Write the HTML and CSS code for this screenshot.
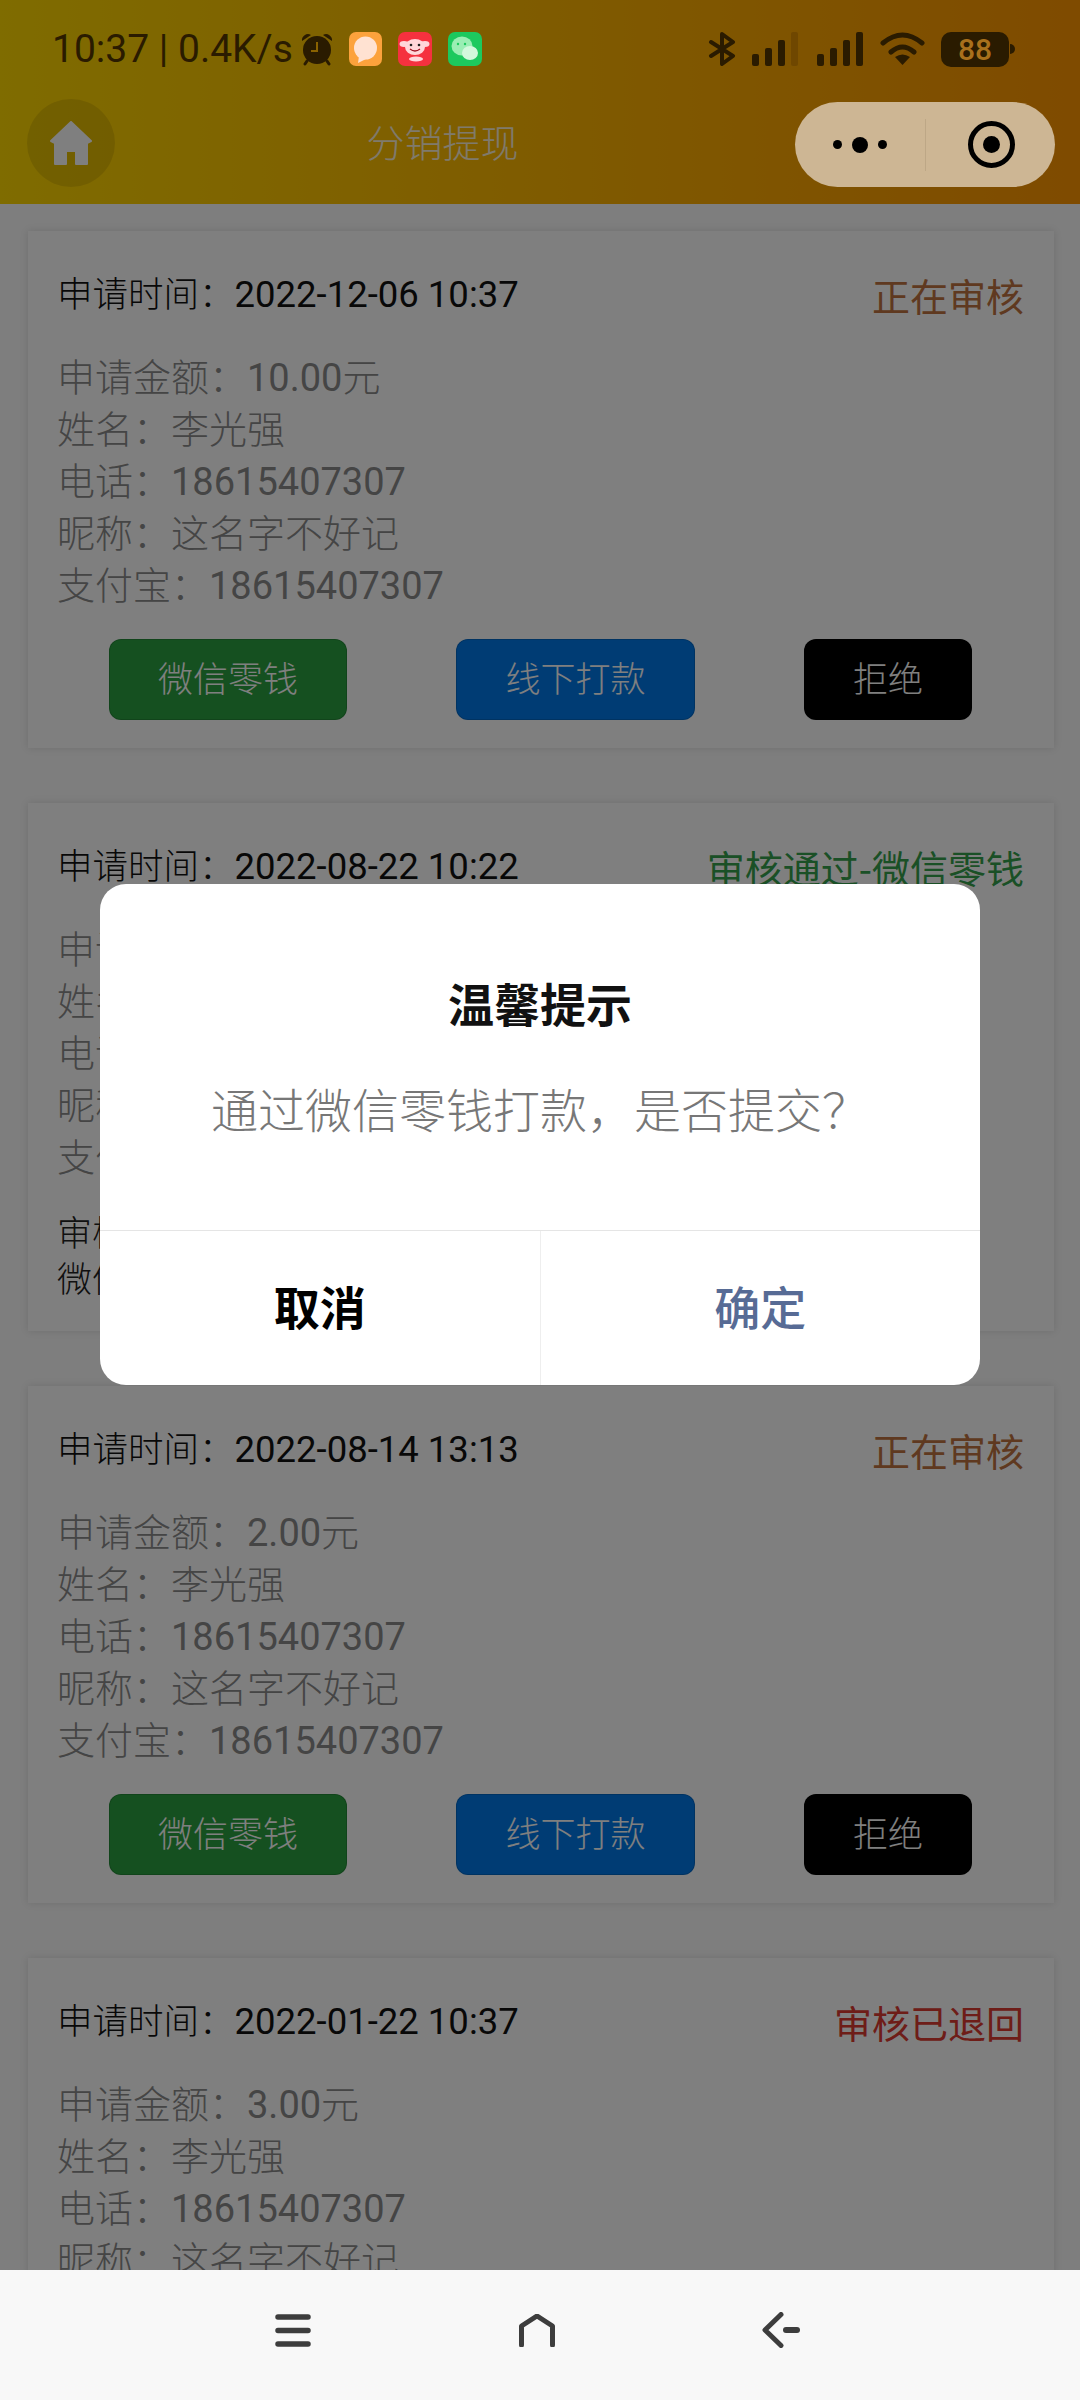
FILE: index.html
```html
<!DOCTYPE html>
<html lang="zh-CN">
<head>
    <meta charset="UTF-8">
    <meta name="viewport" content="width=device-width, initial-scale=1.0">
    <title>分销提现</title>
    <link rel="stylesheet" href="styles.css">
</head>
<body>
    <div class="screen">
        <div class="header">
            <div class="title-row">
                <div class="home-button">
                    <svg width="42" height="44" viewBox="0 0 42 44"><path fill="#fff" stroke="#fff" stroke-width="2" stroke-linejoin="round" d="M21 1 L41 20 L37 22 V43 H26 V30 H16 V43 H5 V22 L1 20 Z"/></svg>
                </div>
                <div class="page-title">分销提现</div>
                <div class="capsule-space"></div>
            </div>
        </div>

        <div class="list">
            <!-- Card 1 -->
            <div class="card">
                <div class="card-head">
                    <div class="apply-time">申请时间：<span class="num">2022-12-06 10:37</span></div>
                    <div class="state state-wait">正在审核</div>
                </div>
                <div class="info">
                    <div>申请金额：<span class="num">10.00</span>元</div>
                    <div>姓名：李光强</div>
                    <div>电话：<span class="num">18615407307</span></div>
                    <div>昵称：这名字不好记</div>
                    <div>支付宝：<span class="num">18615407307</span></div>
                </div>
                <div class="actions">
                    <button class="btn btn-green">微信零钱</button>
                    <button class="btn btn-blue">线下打款</button>
                    <button class="btn btn-black">拒绝</button>
                </div>
            </div>

            <!-- Card 2 -->
            <div class="card">
                <div class="card-head">
                    <div class="apply-time">申请时间：<span class="num">2022-08-22 10:22</span></div>
                    <div class="state state-pass">审核通过-微信零钱</div>
                </div>
                <div class="info">
                    <div>申请金额：<span class="num">5.00</span>元</div>
                    <div>姓名：李光强</div>
                    <div>电话：<span class="num">18615407307</span></div>
                    <div>昵称：这名字不好记</div>
                    <div>支付宝：<span class="num">18615407307</span></div>
                </div>
                <div class="audit">
                    <div>审核时间：<span class="num">2022-08-22 10:30</span></div>
                    <div>微信零钱</div>
                </div>
            </div>

            <!-- Card 3 -->
            <div class="card">
                <div class="card-head">
                    <div class="apply-time">申请时间：<span class="num">2022-08-14 13:13</span></div>
                    <div class="state state-wait">正在审核</div>
                </div>
                <div class="info">
                    <div>申请金额：<span class="num">2.00</span>元</div>
                    <div>姓名：李光强</div>
                    <div>电话：<span class="num">18615407307</span></div>
                    <div>昵称：这名字不好记</div>
                    <div>支付宝：<span class="num">18615407307</span></div>
                </div>
                <div class="actions">
                    <button class="btn btn-green">微信零钱</button>
                    <button class="btn btn-blue">线下打款</button>
                    <button class="btn btn-black">拒绝</button>
                </div>
            </div>

            <!-- Card 4 -->
            <div class="card">
                <div class="card-head">
                    <div class="apply-time">申请时间：<span class="num">2022-01-22 10:37</span></div>
                    <div class="state state-back">审核已退回</div>
                </div>
                <div class="info">
                    <div>申请金额：<span class="num">3.00</span>元</div>
                    <div>姓名：李光强</div>
                    <div>电话：<span class="num">18615407307</span></div>
                    <div>昵称：这名字不好记</div>
                    <div>支付宝：<span class="num">18615407307</span></div>
                </div>
            </div>
        </div>

        <div class="navbar">
            <svg width="36" height="33" viewBox="0 0 36 33"><path fill="none" stroke="#3d3d3d" stroke-width="5.500" stroke-linecap="round" d="M3 3 H33 M3 16.500 H33 M3 30 H33"/></svg>
            <svg width="36" height="33" viewBox="0 0 36 33"><path fill="none" stroke="#3d3d3d" stroke-width="5" stroke-linecap="round" stroke-linejoin="round" d="M2.500 31 V12 L18 2 L33.500 12 V31"/></svg>
            <svg width="38" height="36" viewBox="0 0 38 36"><path fill="none" stroke="#3d3d3d" stroke-width="5" stroke-linecap="round" stroke-linejoin="round" d="M19 2.500 L3 18 L19 33.500"/><path fill="none" stroke="#3d3d3d" stroke-width="6" stroke-linecap="round" d="M24 18 H35"/></svg>
        </div>

        <!-- Dim layer over the page, then the dialog -->
        <div class="mask"></div>

        <div class="statusbar">
            <span class="clock">10:37 | 0.4K/s</span>
            <svg width="32" height="34" viewBox="0 0 32 34">
                <circle cx="16" cy="18" r="14" fill="#2a1b00"/>
                <path fill="#2a1b00" d="M1 9 a6 6 0 0 1 9-6 z M31 9 a6 6 0 0 0-9-6 z"/>
                <path fill="none" stroke="#2a1b00" stroke-width="3" stroke-linecap="round" d="M6 29 L4 32 M26 29 L28 32"/>
                <path fill="none" stroke="#8a6200" stroke-width="2" d="M16 10 V19 H10"/>
            </svg>
            <svg width="33" height="34" viewBox="0 0 33 34">
                <rect width="33" height="34" rx="7" fill="#fca23c"/>
                <circle cx="16.500" cy="16" r="11.500" fill="#ffe2d2"/>
                <path fill="#ffe2d2" d="M10 24 L9 31 L17 27 Z"/>
            </svg>
            <svg width="34" height="34" viewBox="0 0 34 34">
                <rect width="34" height="34" rx="7" fill="#f5313f"/>
                <ellipse cx="17" cy="15" rx="10" ry="8" fill="#ffd6da"/>
                <ellipse cx="6" cy="12" rx="4.500" ry="3" fill="#ffd6da"/>
                <ellipse cx="27" cy="12" rx="4.500" ry="3" fill="#ffd6da"/>
                <circle cx="13" cy="13" r="1.300" fill="#222"/>
                <circle cx="21" cy="13" r="1.300" fill="#222"/>
                <path fill="none" stroke="#a01020" stroke-width="1.300" d="M12 17 Q17 21 22 17"/>
                <ellipse cx="18" cy="27" rx="7" ry="2.500" fill="#ffd6da"/>
            </svg>
            <svg width="34" height="34" viewBox="0 0 34 34">
                <rect width="34" height="34" rx="7" fill="#1cc95e"/>
                <ellipse cx="14" cy="14" rx="10.500" ry="9.500" fill="#9aeeb4"/>
                <circle cx="10" cy="12" r="1.200" fill="#1cc95e"/>
                <circle cx="17" cy="12" r="1.200" fill="#1cc95e"/>
                <ellipse cx="22" cy="21" rx="8" ry="7" fill="#d2f8dc"/>
            </svg>

            <div class="status-right">
                <svg width="28" height="34" viewBox="0 0 28 34"><path fill="none" stroke="#2a1b00" stroke-width="4" stroke-linejoin="round" stroke-linecap="round" d="M3 10 L25 24 L14 32 V2 L25 10 L3 24"/></svg>
                <svg class="sig-first" width="47" height="34" viewBox="0 0 47 34">
                    <rect x="0" y="22" width="7" height="12" rx="2" fill="#2a1b00"/>
                    <rect x="13" y="16" width="7" height="18" rx="2" fill="#2a1b00"/>
                    <rect x="26" y="8" width="7" height="26" rx="2" fill="#2a1b00"/>
                    <rect x="39" y="0" width="7" height="34" rx="2" fill="#6f4700"/>
                </svg>
                <svg width="47" height="34" viewBox="0 0 47 34">
                    <rect x="0" y="22" width="7" height="12" rx="2" fill="#2a1b00"/>
                    <rect x="13" y="16" width="7" height="18" rx="2" fill="#2a1b00"/>
                    <rect x="26" y="8" width="7" height="26" rx="2" fill="#2a1b00"/>
                    <rect x="39" y="0" width="7" height="34" rx="2" fill="#2a1b00"/>
                </svg>
                <svg width="45" height="34" viewBox="0 0 45 34">
                    <path fill="none" stroke="#2a1b00" stroke-width="5" stroke-linecap="round" d="M3 11 Q22.500 -5 42 11 M11 20 Q22.500 10 34 20"/>
                    <path fill="#2a1b00" d="M22.500 33 L15 25 Q22.500 20 30 25 Z"/>
                </svg>
                <div class="battery"><div class="battery-body">88</div><div class="battery-nub"></div></div>
            </div>
        </div>

        <div class="capsule">
            <div class="capsule-more">
                <span class="dot"></span>
                <span class="dot dot-big"></span>
                <span class="dot"></span>
            </div>
            <div class="capsule-line"></div>
            <div class="capsule-close"><div class="ring"><div class="ring-core"></div></div></div>
        </div>

        <div class="dialog">
            <div class="dialog-body">
                <div class="dialog-title">温馨提示</div>
                <div class="dialog-text">通过微信零钱打款，是否提交？</div>
            </div>
            <div class="dialog-foot">
                <div class="dialog-btn dialog-cancel">取消</div>
                <div class="dialog-btn dialog-ok">确定</div>
            </div>
        </div>
    </div>
</body>
</html>
```

FILE: styles.css
```css
* {
    box-sizing: border-box;
}
body {
    margin: 0;
    background-color: #fcfcfc;
    font-family: "Noto Sans CJK SC", "Noto Sans", sans-serif;
    font-weight: 300;
}
.screen {
    position: relative;
    width: 1080px;
    height: 2400px;
    overflow: hidden;
    display: flex;
    flex-direction: column;
}
.num {
    font-family: Roboto, "Noto Sans", sans-serif;
    font-size: 38px;
    font-weight: 400;
}

/* Header */
.header {
    height: 204px;
    flex-shrink: 0;
    padding-top: 99px;
    background: linear-gradient(to right, #ffd800, #ff9600);
}
.title-row {
    display: flex;
    align-items: center;
    height: 88px;
    padding-left: 27px;
}
.home-button {
    width: 88px;
    height: 88px;
    border-radius: 50%;
    background-color: rgba(0, 0, 0, 0.1);
    display: flex;
    justify-content: center;
    align-items: center;
}
.page-title {
    flex: 1;
    text-align: center;
    font-size: 38px;
    padding-bottom: 6px;
    color: #fff;
    opacity: 0.85;
}
.capsule-space {
    width: 310px;
}

/* List */
.list {
    flex: 1;
    min-height: 0;
    overflow: hidden;
    padding: 27px 26px 0 28px;
}
.card {
    background-color: #fff;
    box-shadow: 0 0 8px rgba(0, 0, 0, 0.12);
    padding: 36px 30px 28px 29px;
    margin-bottom: 55px;
}
.card-head {
    display: flex;
    justify-content: space-between;
    align-items: center;
    height: 52px;
    margin-bottom: 30px;
}
.apply-time {
    font-size: 35.500px;
    line-height: 52px;
    color: #111;
}
.apply-time .num {
    font-size: 36.500px;
}
.state {
    font-size: 38px;
    font-weight: 400;
    line-height: 52px;
    padding-top: 4px;
}
.state-wait {
    color: #bf7340;
}
.state-pass {
    color: #34a04c;
}
.state-back {
    color: #dc3a30;
}
.info {
    font-size: 38px;
    color: #8a8a8a;
}
.info div {
    height: 52px;
    line-height: 52px;
}
.audit {
    margin: 27px 0 3px;
    font-size: 35px;
    color: #222;
}
.audit div {
    height: 46px;
    line-height: 46px;
}
.actions {
    display: flex;
    justify-content: space-between;
    margin-top: 30px;
    padding: 0 52px;
}
.btn {
    height: 81px;
    border: 1px solid rgba(0, 0, 0, 0.15);
    border-radius: 12px;
    color: #fff;
    font-family: inherit;
    font-size: 35px;
    font-weight: 300;
    padding: 0 0 6px;
}
.btn-green {
    width: 238px;
    background-color: #2aa040;
}
.btn-blue {
    width: 239px;
    background-color: #0078e8;
}
.btn-black {
    width: 168px;
    background-color: #000;
}

/* Bottom navigation */
.navbar {
    position: relative;
    z-index: 3;
    height: 130px;
    flex-shrink: 0;
    background-color: #f8f8f8;
    padding: 0 280px 10px 275px;
    display: flex;
    justify-content: space-between;
    align-items: center;
}

/* Dim layer and things above it */
.mask {
    position: absolute;
    z-index: 1;
    left: 0;
    top: 0;
    width: 100%;
    height: 100%;
    background-color: rgba(0, 0, 0, 0.5);
}
.statusbar {
    position: absolute;
    z-index: 2;
    left: 52px;
    top: 32px;
    width: 963px;
    height: 34px;
    display: flex;
    align-items: center;
    gap: 16px;
}
.clock {
    font-family: Roboto, "Noto Sans", sans-serif;
    font-size: 39px;
    font-weight: 400;
    line-height: 34px;
    color: #2a1b00;
    white-space: nowrap;
    margin-right: -8px;
}
.status-right {
    margin-left: auto;
    display: flex;
    align-items: center;
    gap: 16px;
}
.sig-first {
    margin-right: 2px;
}
.battery {
    display: flex;
    align-items: center;
}
.battery-body {
    width: 68px;
    height: 35px;
    border-radius: 10px;
    background-color: #2a1b00;
    color: #a8701c;
    font-family: Roboto, sans-serif;
    font-size: 30px;
    font-weight: 500;
    line-height: 35px;
    text-align: center;
}
.battery-nub {
    width: 5px;
    height: 10px;
    margin-left: 1px;
    border-radius: 0 5px 5px 0;
    background-color: #2a1b00;
}
.capsule {
    position: absolute;
    z-index: 2;
    left: 795px;
    top: 102px;
    width: 260px;
    height: 85px;
    border-radius: 43px;
    background-color: #cdb694;
    display: flex;
    align-items: center;
}
.capsule-more {
    width: 130px;
    display: flex;
    justify-content: center;
    align-items: center;
    gap: 10px;
}
.dot {
    width: 9px;
    height: 9px;
    border-radius: 50%;
    background-color: #000;
}
.dot-big {
    width: 16px;
    height: 16px;
}
.capsule-line {
    width: 1px;
    height: 52px;
    background-color: #bda786;
}
.capsule-close {
    flex: 1;
    display: flex;
    justify-content: center;
    align-items: center;
    padding-left: 2px;
}
.ring {
    width: 47px;
    height: 47px;
    border: 5px solid #000;
    border-radius: 50%;
    display: flex;
    justify-content: center;
    align-items: center;
}
.ring-core {
    width: 17px;
    height: 17px;
    border-radius: 50%;
    background-color: #000;
}

/* Dialog */
.dialog {
    position: absolute;
    z-index: 2;
    left: 100px;
    top: 884px;
    width: 880px;
    height: 501px;
    border-radius: 26px;
    background-color: #fff;
    display: flex;
    flex-direction: column;
    overflow: hidden;
}
.dialog-body {
    height: 347px;
    padding-top: 85px;
    text-align: center;
    border-bottom: 1px solid #e5e5e5;
}
.dialog-title {
    font-size: 46px;
    font-weight: 700;
    line-height: 66px;
    color: #111;
}
.dialog-text {
    margin-top: 39px;
    font-size: 47px;
    line-height: 68px;
    color: #777;
}
.dialog-foot {
    flex: 1;
    display: flex;
}
.dialog-btn {
    flex: 1;
    display: flex;
    justify-content: center;
    align-items: center;
    padding-bottom: 6px;
    font-size: 46px;
    font-weight: 700;
}
.dialog-cancel {
    color: #000;
    border-right: 1px solid #eee;
}
.dialog-ok {
    color: #576b95;
    font-weight: 500;
}
```
